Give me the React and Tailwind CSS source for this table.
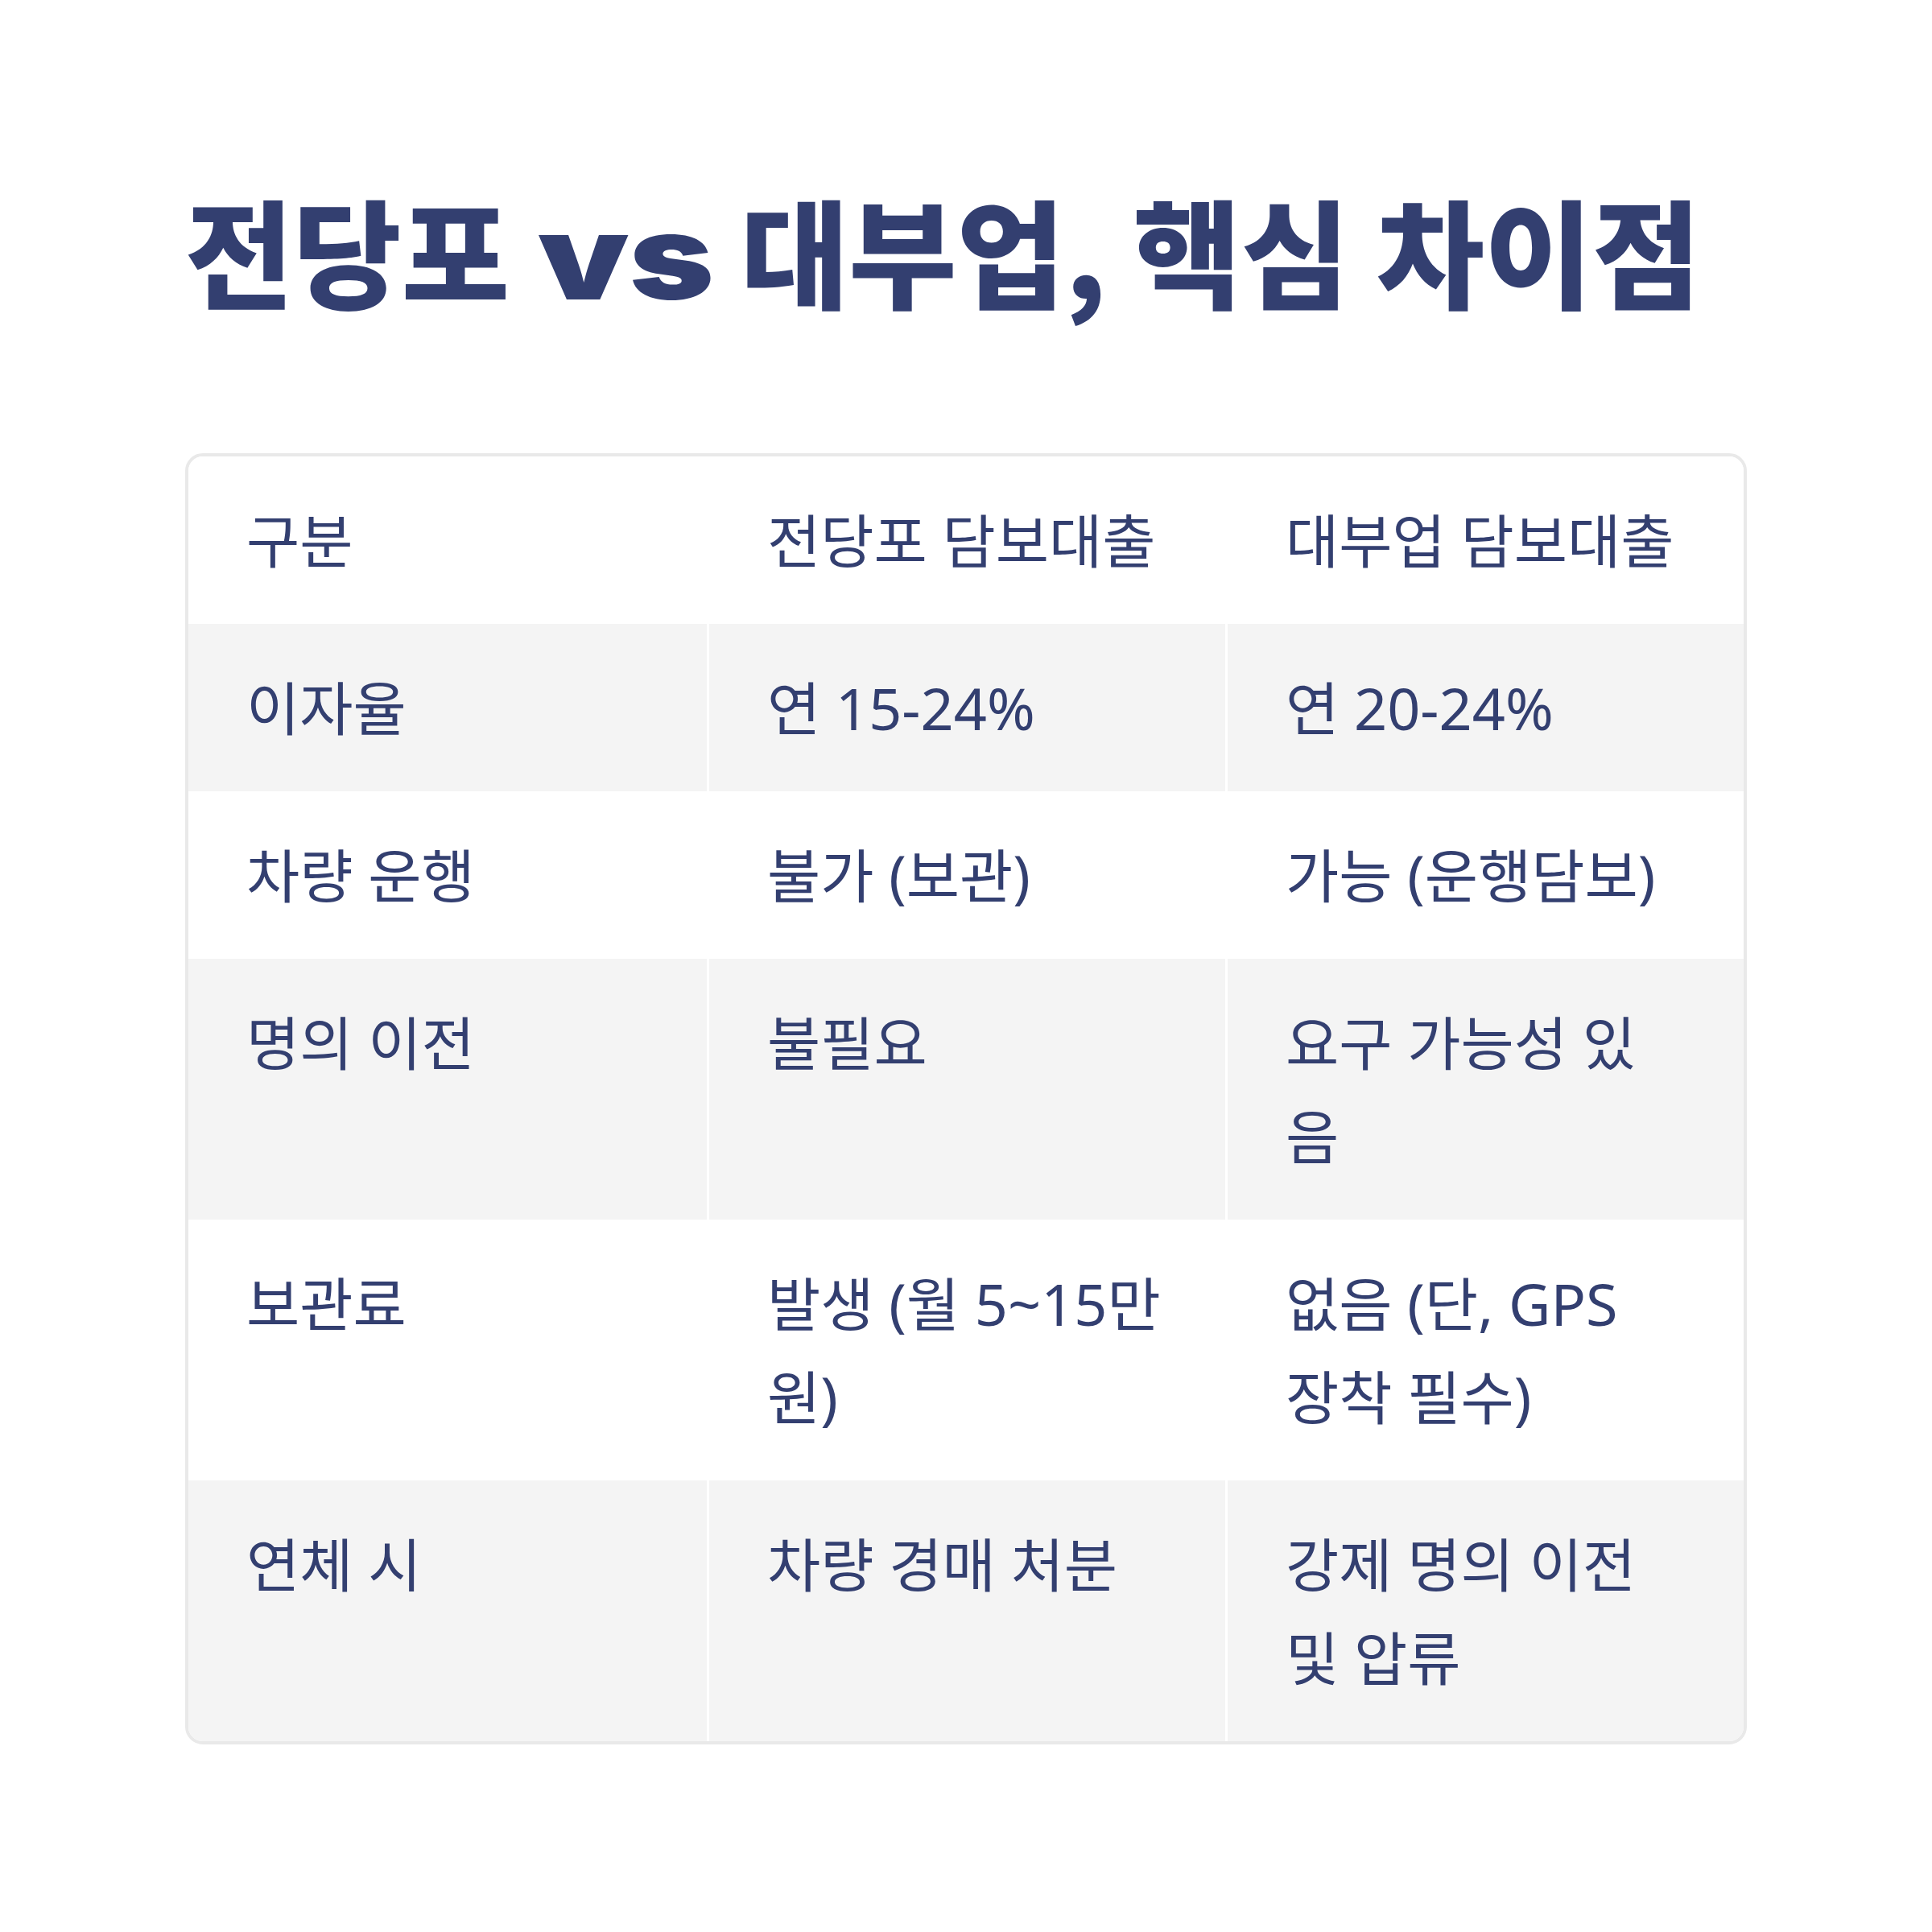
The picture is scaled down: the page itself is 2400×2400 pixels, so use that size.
import React from "react";

const rows = [
  ["이자율", "연 15-24%", "연 20-24%"],
  ["차량 운행", "불가 (보관)", "가능 (운행담보)"],
  ["명의 이전", "불필요", "요구 가능성 있음"],
  ["보관료", "발생 (월 5~15만원)", "없음 (단, GPS 장착 필수)"],
  ["연체 시", "차량 경매 처분", "강제 명의 이전 및 압류"],
];

const header = ["구분", "전당포 담보대출", "대부업 담보대출"];

const Row = ({ cells, gray }) => (
  <div className={`grid grid-cols-3 ${gray ? "bg-[#f4f4f4]" : "bg-white"}`}>
    {cells.map((c, i) => (
      <div
        key={i}
        className={`px-[72px] py-[46px] text-[72px] leading-[116px] text-[#333f70] ${
          i > 0 ? "border-l-[3px] border-white" : ""
        }`}
      >
        {c}
      </div>
    ))}
  </div>
);

export default function App() {
  return (
    <div className="w-[2400px] h-[2400px] bg-white px-[230px] pt-[221px] font-['Noto_Sans','Noto_Sans_CJK_KR',sans-serif]">
      {/* title */}
      <h1 className="text-[146px] leading-[1.2] font-black text-[#333f70] font-['Noto_Sans_CJK_KR',sans-serif] whitespace-nowrap">
        전당포{" "}
        <span className="inline-block origin-left scale-x-[1.23] mr-[40px] ml-[2px] font-['Inter',sans-serif]">
          vs
        </span>{" "}
        대부업, 핵심 차이점
      </h1>

      {/* comparison table */}
      <div className="mt-[156px] border-4 border-[#e9e9e9] rounded-[22px] overflow-hidden">
        <Row cells={header} gray={false} />
        {rows.map((r, i) => (
          <Row key={i} cells={r} gray={i % 2 === 0} />
        ))}
      </div>
    </div>
  );
}
